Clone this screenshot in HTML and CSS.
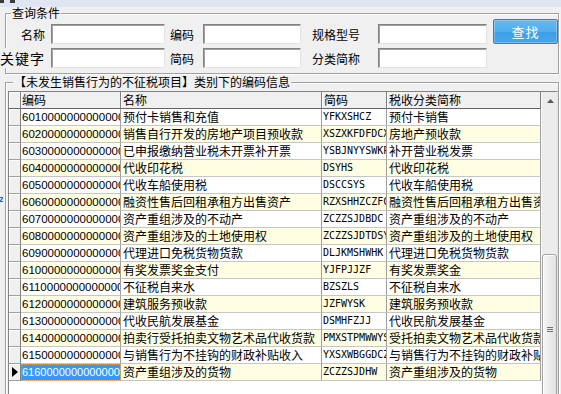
FILE: index.html
```html
<!DOCTYPE html>
<html lang="zh-CN">
<head>
    <meta charset="UTF-8">
    <meta name="viewport" content="width=device-width, initial-scale=1.0">
    <title>编码信息查询</title>
    <link rel="stylesheet" href="styles.css">
</head>
<body>
    <div class="titlebar"><span class="tb-ico"></span><span class="tb-ico tb-ico2"></span></div>
    <svg class="edge-mark" width="3" height="7" viewBox="0 0 3 7"><path d="M0 1.5H3L0 5.5H3" fill="none" stroke="#2a62d8" stroke-width="1.2"/></svg>

    <!-- 查询条件 -->
    <fieldset class="group query">
        <legend>查询条件</legend>
        <div class="query-grid">
            <label class="lbl lbl-right">名称</label>
            <input class="txt" type="text">
            <label class="lbl">编码</label>
            <input class="txt" type="text">
            <label class="lbl lbl-wide">规格型号</label>
            <input class="txt" type="text">
            <button class="btn-find" type="button">查找</button>

            <label class="lbl lbl-right lbl-key">关键字</label>
            <input class="txt" type="text">
            <label class="lbl">简码</label>
            <input class="txt" type="text">
            <label class="lbl lbl-wide">分类简称</label>
            <input class="txt" type="text">
        </div>
    </fieldset>

    <!-- 编码信息 -->
    <fieldset class="group result">
        <legend>【未发生销售行为的不征税项目】类别下的编码信息</legend>
        <div class="grid">
            <div class="grid-body">
                <div class="row head">
                    <div class="ind"></div>
                    <div class="c code-h">编码</div>
                    <div class="c">名称</div>
                    <div class="c">简码</div>
                    <div class="c">税收分类简称</div>
                </div>
                <div class="row">
                    <div class="ind"></div>
                    <div class="c code">6010000000000000000</div>
                    <div class="c">预付卡销售和充值</div>
                    <div class="c jm">YFKXSHCZ</div>
                    <div class="c">预付卡销售</div>
                </div>
                <div class="row alt">
                    <div class="ind"></div>
                    <div class="c code">6020000000000000000</div>
                    <div class="c">销售自行开发的房地产项目预收款</div>
                    <div class="c jm">XSZXKFDFDCXMYSK</div>
                    <div class="c">房地产预收款</div>
                </div>
                <div class="row">
                    <div class="ind"></div>
                    <div class="c code">6030000000000000000</div>
                    <div class="c">已申报缴纳营业税未开票补开票</div>
                    <div class="c jm">YSBJNYYSWKPBKP</div>
                    <div class="c">补开营业税发票</div>
                </div>
                <div class="row alt">
                    <div class="ind"></div>
                    <div class="c code">6040000000000000000</div>
                    <div class="c">代收印花税</div>
                    <div class="c jm">DSYHS</div>
                    <div class="c">代收印花税</div>
                </div>
                <div class="row">
                    <div class="ind"></div>
                    <div class="c code">6050000000000000000</div>
                    <div class="c">代收车船使用税</div>
                    <div class="c jm">DSCCSYS</div>
                    <div class="c">代收车船使用税</div>
                </div>
                <div class="row alt">
                    <div class="ind"></div>
                    <div class="c code">6060000000000000000</div>
                    <div class="c">融资性售后回租承租方出售资产</div>
                    <div class="c jm">RZXSHHZCZFCSZC</div>
                    <div class="c">融资性售后回租承租方出售资产</div>
                </div>
                <div class="row">
                    <div class="ind"></div>
                    <div class="c code">6070000000000000000</div>
                    <div class="c">资产重组涉及的不动产</div>
                    <div class="c jm">ZCZZSJDBDC</div>
                    <div class="c">资产重组涉及的不动产</div>
                </div>
                <div class="row alt">
                    <div class="ind"></div>
                    <div class="c code">6080000000000000000</div>
                    <div class="c">资产重组涉及的土地使用权</div>
                    <div class="c jm">ZCZZSJDTDSYQ</div>
                    <div class="c">资产重组涉及的土地使用权</div>
                </div>
                <div class="row">
                    <div class="ind"></div>
                    <div class="c code">6090000000000000000</div>
                    <div class="c">代理进口免税货物货款</div>
                    <div class="c jm">DLJKMSHWHK</div>
                    <div class="c">代理进口免税货物货款</div>
                </div>
                <div class="row alt">
                    <div class="ind"></div>
                    <div class="c code">6100000000000000000</div>
                    <div class="c">有奖发票奖金支付</div>
                    <div class="c jm">YJFPJJZF</div>
                    <div class="c">有奖发票奖金</div>
                </div>
                <div class="row">
                    <div class="ind"></div>
                    <div class="c code">6110000000000000000</div>
                    <div class="c">不征税自来水</div>
                    <div class="c jm">BZSZLS</div>
                    <div class="c">不征税自来水</div>
                </div>
                <div class="row alt">
                    <div class="ind"></div>
                    <div class="c code">6120000000000000000</div>
                    <div class="c">建筑服务预收款</div>
                    <div class="c jm">JZFWYSK</div>
                    <div class="c">建筑服务预收款</div>
                </div>
                <div class="row">
                    <div class="ind"></div>
                    <div class="c code">6130000000000000000</div>
                    <div class="c">代收民航发展基金</div>
                    <div class="c jm">DSMHFZJJ</div>
                    <div class="c">代收民航发展基金</div>
                </div>
                <div class="row alt">
                    <div class="ind"></div>
                    <div class="c code">6140000000000000000</div>
                    <div class="c">拍卖行受托拍卖文物艺术品代收货款</div>
                    <div class="c jm">PMXSTPMWWYSPDSHK</div>
                    <div class="c">受托拍卖文物艺术品代收货款</div>
                </div>
                <div class="row">
                    <div class="ind"></div>
                    <div class="c code">6150000000000000000</div>
                    <div class="c">与销售行为不挂钩的财政补贴收入</div>
                    <div class="c jm">YXSXWBGGDCZBTSR</div>
                    <div class="c">与销售行为不挂钩的财政补贴收入</div>
                </div>
                <div class="row alt">
                    <div class="ind ind-cur">
                        <svg width="6" height="10" viewBox="0 0 6 10"><path d="M0 0L6 5L0 10Z" fill="#000"/></svg>
                    </div>
                    <div class="c code code-sel">6160000000000000</div>
                    <div class="c">资产重组涉及的货物</div>
                    <div class="c jm">ZCZZSJDHW</div>
                    <div class="c">资产重组涉及的货物</div>
                </div>
            </div>

            <div class="vscroll">
                <div class="sb-up">
                    <svg width="7" height="4" viewBox="0 0 7 4"><path d="M0 4L3.5 0L7 4Z" fill="#5a5a5a"/></svg>
                </div>
                <div class="sb-thumb">
                    <svg width="6" height="5" viewBox="0 0 6 5"><path d="M0 0.5H6M0 2.5H6M0 4.5H6" stroke="#707070" stroke-width="1"/></svg>
                </div>
            </div>
        </div>
    </fieldset>
</body>
</html>
```

FILE: styles.css
```css
/* janela */
html, body {
    margin: 0;
    height: 100%;
    overflow: hidden;
}

body {
    position: relative;
    background-color: #f0f0f0;
    color: #000;
    font-family: "Noto Sans CJK SC", "Liberation Sans", sans-serif;
    font-size: 12px;
}

.titlebar {
    height: 7px;
    background-color: #dfe6f1;
    display: flex;
    gap: 6px;
}

.tb-ico {
    width: 4px;
    height: 3px;
    background-color: #3c3c3c;
}

.tb-ico2 {
    width: 5px;
}

.edge-mark {
    position: absolute;
    left: 0;
    top: 196px;
}

/* group boxes */
.group {
    margin: 0 2px 0 5px;
    padding: 0;
    min-width: 0;
    border: 1px solid #a0a0a0;
    box-shadow: inset 1px 1px 0 #fff, 1px 1px 0 #fff;
}

.group legend {
    margin-left: 5px;
    padding: 0 1px;
    font-size: 12px;
    line-height: 12px;
    background-color: #f0f0f0;
}

.query {
    padding: 5px 0;
}

.result {
    margin-top: 2px;
    padding: 3px 0 0 2px;
}

/* query form */
.query-grid {
    display: grid;
    grid-template-columns: 45px 114px 38px 98px 77px 109px 71px;
    grid-template-rows: 20px 20px;
    row-gap: 4px;
}

.lbl {
    line-height: 21px;
    padding-left: 5px;
    white-space: nowrap;
}

.lbl-right {
    text-align: right;
    padding: 0 6px 0 0;
}

.lbl-wide {
    padding-left: 11px;
}

.lbl-key {
    position: relative;
    margin-left: -6px;
    font-size: 14px;
    letter-spacing: 1px;
    background-color: #f0f0f0;
}

.txt {
    box-sizing: border-box;
    width: 100%;
    height: 20px;
    margin: 0;
    padding: 0 2px;
    border: 1px solid;
    border-color: #828282 #e3e3e3 #e3e3e3 #828282;
    box-shadow: inset 1px 1px 0 #a0a0a0;
    background-color: #fff;
    outline: none;
}

.btn-find {
    align-self: start;
    height: 25px;
    margin: -5px 0 0 6px;
    padding: 0;
    border: 1px solid #2f80c6;
    border-radius: 2px;
    background: linear-gradient(#63baf1, #51aeed 50%, #3f9fe6 51%, #48a6ea);
    box-shadow: inset 0 0 0 1px rgba(255, 255, 255, 0.25);
    color: #fff;
    font-family: "Noto Sans CJK SC", sans-serif;
    font-size: 13px;
    letter-spacing: 1px;
    cursor: pointer;
}

/* data grid */
.grid {
    display: flex;
    height: 320px;
    border-left: 1px solid #828282;
    border-top: 1px solid #828282;
    border-right: 1px solid #e3e3e3;
    background-color: #fff;
}

.grid-body {
    width: 532px;
}

.row {
    display: grid;
    grid-template-columns: 12px 100px 201px 65px 154px;
    height: 17px;
}

.row.alt {
    background-color: #fffde2;
}

.c {
    box-sizing: border-box;
    padding-left: 2px;
    border-right: 1px solid #a0a0a0;
    border-bottom: 1px solid #c6c6c6;
    line-height: 16px;
    white-space: nowrap;
    overflow: hidden;
}

.ind {
    box-sizing: border-box;
    display: flex;
    align-items: center;
    padding-left: 3px;
    background-color: #f0f0f0;
    border-right: 1px solid #808080;
    border-bottom: 1px solid #a0a0a0;
    box-shadow: inset 1px 1px 0 #fff;
}

.code {
    padding-left: 1px;
    font-family: "Liberation Sans", Arial, sans-serif;
    font-size: 11.5px;
}

.code-sel {
    background-color: #3399ff;
    color: #fff;
    font-size: 11px;
    outline: 1px dotted #d9a45a;
    outline-offset: -1px;
}

.jm {
    padding-left: 1px;
    font-family: "DejaVu Sans Mono", "Liberation Mono", monospace;
    font-size: 10px;
}

.head .c {
    background-color: #f0f0f0;
    border-right-color: #808080;
    border-bottom-color: #646464;
    box-shadow: inset 1px 0 0 #fff;
}

.head .code-h {
    padding-left: 1px;
}

.head .ind {
    border-bottom-color: #646464;
}

/* scrollbar */
.vscroll {
    box-sizing: border-box;
    width: 16px;
    display: flex;
    flex-direction: column;
    background-color: #ececec;
    border-left: 1px solid #f7f7f7;
}

.sb-up {
    height: 17px;
    display: flex;
    align-items: center;
    justify-content: center;
    padding-left: 2px;
}

.sb-thumb {
    box-sizing: border-box;
    height: 150px;
    margin-top: 145px;
    display: flex;
    align-items: center;
    justify-content: center;
    border: 1px solid #a3a3a3;
    border-radius: 3px;
    background: linear-gradient(to right, #f6f6f6, #e2e2e2);
    box-shadow: inset 1px 1px 0 #fff;
}
```
